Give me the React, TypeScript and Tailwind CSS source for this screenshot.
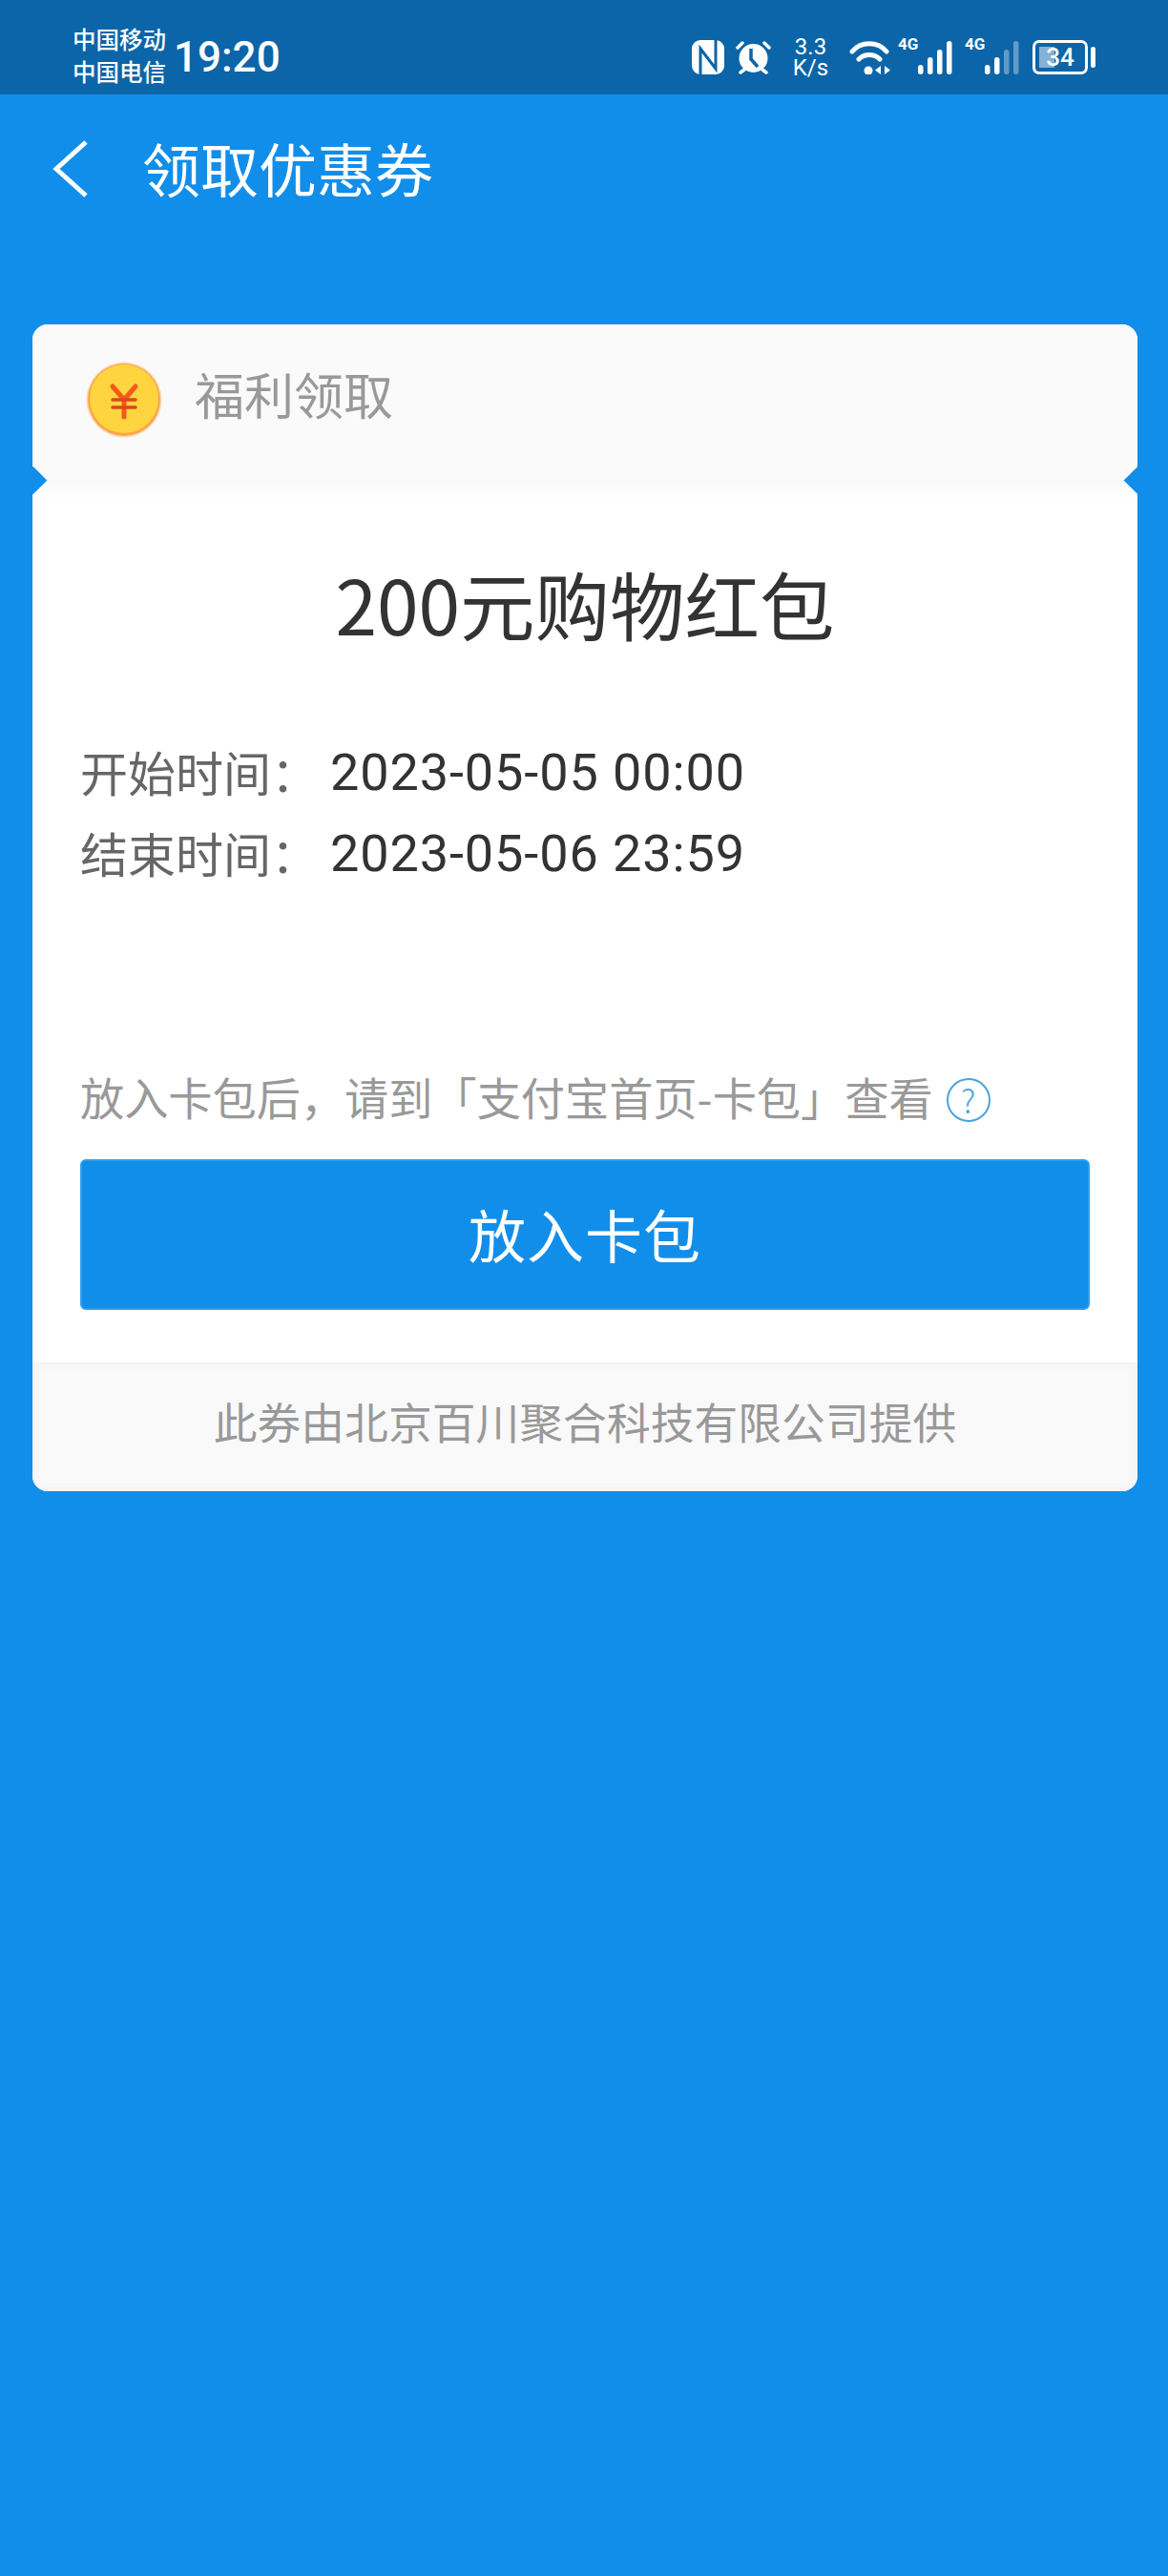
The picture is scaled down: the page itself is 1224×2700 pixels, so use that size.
const cjk = 'font-["Noto_Sans_CJK_SC","Noto_Sans",sans-serif]';

function Bars({ dim }: { dim: number }) {
  const hs = [10, 18, 26, 35];
  return (
    <svg width="37" height="36" viewBox="0 0 37 36">
      {hs.map((h, i) => (
        <rect key={i} x={i * 10 + 1} y={36 - h} width="5.500" height={h} rx="2.750" fill="#fff" opacity={i >= dim ? 0.35 : 1} />
      ))}
    </svg>
  );
}

function StatusIcons() {
  return (
    <div className="flex items-center text-white">
      {/* nfc */}
      <svg className="mr-[12px]" width="34" height="36" viewBox="0 0 34 36">
        <rect x="0" y="0" width="34" height="36" rx="9" fill="#fff" />
        <path d="M9 36V9l16 21V0" fill="none" stroke="#0b65a8" strokeWidth="3" />
      </svg>
      {/* alarm */}
      <svg className="mr-[22px]" width="37" height="36" viewBox="0 0 37 36">
        <circle cx="18.500" cy="19" r="15" fill="#fff" />
        <path d="M2 8l5-5M35 8l-5-5M5 34l4-3M32 34l-4-3" stroke="#fff" strokeWidth="3.500" strokeLinecap="round" />
        <path d="M16 9v11l7 8" fill="none" stroke="#0b65a8" strokeWidth="3.500" />
      </svg>
      <div className="mr-[21px] flex w-[39px] flex-col items-center font-['Roboto',sans-serif] text-[24px] leading-[22px]">
        <span>3.3</span>
        <span>K/s</span>
      </div>
      {/* wifi */}
      <svg width="43" height="36" viewBox="0 0 43 36">
        <path d="M3 12C12 1 30 1 39 12M10 20c6-6 16-6 22 0" fill="none" stroke="#fff" strokeWidth="5" strokeLinecap="round" />
        <circle cx="20" cy="32" r="4.500" fill="#fff" />
        <path d="M33 27v9l-6-4.500zM37 27v9l6-4.500z" fill="#fff" />
      </svg>
      <span className="ml-[8px] w-[20px] self-start font-['Roboto',sans-serif] text-[17px] leading-[16px] font-bold">4G</span>
      <Bars dim={4} />
      <span className="ml-[13px] w-[20px] self-start font-['Roboto',sans-serif] text-[17px] leading-[16px] font-bold">4G</span>
      <Bars dim={2} />
      {/* battery */}
      <div className="ml-[14px] flex items-center gap-[3px]">
        <div className="relative flex h-[36px] w-[58px] items-center justify-center rounded-[7px] border-[3px] border-white">
          <div className="absolute top-[4px] bottom-[4px] left-[4px] w-[16px] bg-white/50" />
          <span className="relative font-['Roboto',sans-serif] text-[26px] leading-none font-medium">34</span>
        </div>
        <div className="h-[22px] w-[5px] rounded-full bg-white" />
      </div>
    </div>
  );
}

function Coin() {
  return (
    <svg width="80" height="80" viewBox="0 0 80 80">
      <circle cx="40" cy="40" r="39.500" fill="#fdd9b4" />
      <circle cx="40" cy="40" r="38" fill="#f9a54a" />
      <circle cx="40" cy="39" r="36" fill="#ffd53f" />
      <path d="M28 26l12 14 12-14M40 40v18" fill="none" stroke="#f4591d" strokeWidth="5" strokeLinecap="round" strokeLinejoin="round" />
      <path d="M28 40h24M28 48h24" fill="none" stroke="#d9481a" strokeWidth="3.500" strokeLinecap="round" />
    </svg>
  );
}

export default function App() {
  return (
    <div className={`flex min-h-[2700px] w-[1224px] flex-col bg-[#118eea] ${cjk}`}>
      <div className="flex h-[99px] items-center justify-between bg-[#0b65a8] pt-[20px] pr-[76px] pl-[76px] text-white">
        <div className="flex items-center gap-[8px]">
          <div className="mb-[3px] text-[24.500px] leading-[34px] font-medium">
            <div>中国移动</div>
            <div>中国电信</div>
          </div>
          <span className="font-['Roboto',sans-serif] text-[44px] leading-none font-medium">19:20</span>
        </div>
        <StatusIcons />
      </div>

      <div className="flex h-[156px] items-center pl-[54px] text-white">
        <svg width="40" height="64" viewBox="0 0 40 64">
          <path d="M36 4L5 32l31 28" fill="none" stroke="#fff" strokeWidth="5" />
        </svg>
        <span className="mb-[3px] ml-[55px] text-[61px] leading-none">领取优惠券</span>
      </div>

      <div className="mt-[85px] ml-[34px] w-[1158px] overflow-hidden rounded-[16px] bg-white">
        <div className="relative">
          <div className="flex h-[163px] items-center bg-[#fafafa] pb-[12px] pl-[56px]">
            <div className="mt-[6px]">
              <Coin />
            </div>
            <span className="mb-[6px] ml-[34px] text-[52px] leading-none text-[#999999]">福利领取</span>
          </div>
          <div className="h-[22px] bg-gradient-to-b from-[#f8f8f8] to-white" />
          <div className="absolute top-[152.5px] left-[-10.5px] h-[21px] w-[21px] rotate-45 bg-[#118eea]" />
          <div className="absolute top-[152.5px] right-[-10.5px] h-[21px] w-[21px] rotate-45 bg-[#118eea]" />
        </div>

        <div className="px-[50px]">
          <div className="mt-[57px] text-center text-[78.500px] leading-[100px] text-[#333333]">200元购物红包</div>
          <div className="mt-[96px] flex flex-col gap-[25px] text-[50px] leading-[60px] text-[#666666]">
            <div className="flex h-[60px]">
              <span className="w-[262px]">开始时间：</span>
              <span className="mt-[2px] font-['Roboto',sans-serif] text-[54px] tracking-[0.9px] text-[#333333]">2023-05-05 00:00</span>
            </div>
            <div className="flex h-[60px]">
              <span className="w-[262px]">结束时间：</span>
              <span className="mt-[2px] font-['Roboto',sans-serif] text-[54px] tracking-[0.9px] text-[#333333]">2023-05-06 23:59</span>
            </div>
          </div>
          <div className="mt-[196px] flex items-center text-[46.200px] leading-[60px] whitespace-nowrap text-[#999999]">
            <span className="mb-[3px]">放入卡包后，请到「支付宝首页-卡包」查看</span>
            <span className="mt-[4px] ml-[14px] flex h-[46px] w-[46px] items-center justify-center rounded-full border-[2.500px] border-[#4aa3df] text-[34px] leading-none font-light text-[#4aa3df]">?</span>
          </div>
          <div className="mt-[33px] flex h-[158px] items-center justify-center rounded-[6px] border-2 border-[#2f9ff0] bg-[#118eea] pb-[3px] text-[60px] leading-none tracking-[1px] text-white">
            放入卡包
          </div>
        </div>

        <div className="mt-[55px] flex h-[135px] items-center justify-center bg-[#f9f9f9] pb-[11px] text-[45.800px] leading-none text-[#999999] shadow-[inset_0_0_12px_#f0f0f0]">
          此券由北京百川聚合科技有限公司提供
        </div>
      </div>
    </div>
  );
}
